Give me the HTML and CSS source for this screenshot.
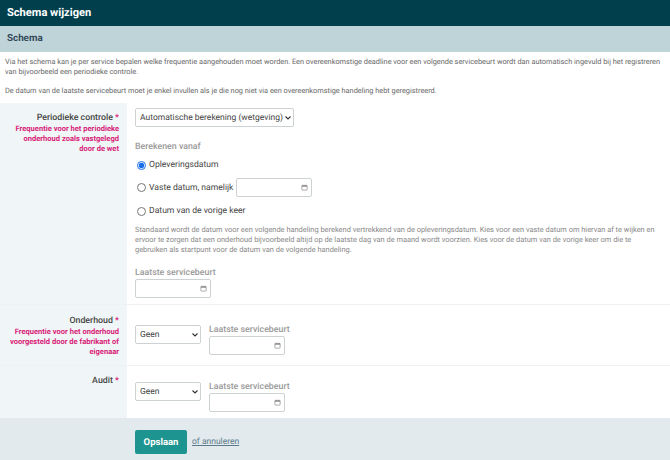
FILE: index.html
```html
<!DOCTYPE html>
<html lang="nl">
<head>
<meta charset="utf-8">
<title>Schema wijzigen</title>
<link rel="stylesheet" href="styles.css">
</head>
<body>
<header class="topbar">Schema wijzigen</header>
<h2 class="section">Schema</h2>
<div class="intro">
<p>Via het schema kan je per service bepalen welke frequentie aangehouden moet worden. Een overeenkomstige deadline voor een volgende servicebeurt wordt dan automatisch ingevuld bij het registreren van bijvoorbeeld een periodieke controle.</p>
<p>De datum van de laatste servicebeurt moet je enkel invullen als je die nog niet via een overeenkomstige handeling hebt geregistreerd.</p>
</div>
<form class="form">
<div class="row row-one">
<div class="side">
<div class="label">Periodieke controle <span class="req">*</span></div>
<div class="hint">Frequentie voor het periodieke onderhoud zoals vastgelegd door de wet</div>
</div>
<div class="main">
<select class="select select-wide"><option>Automatische berekening (wetgeving)</option></select>
<div class="sub sub-calc">Berekenen vanaf</div>
<label class="radio radio-first"><input type="radio" name="v" checked> Opleveringsdatum</label>
<div class="radio radio-date"><label class="radio-inline"><input type="radio" name="v"> Vaste datum, namelijk</label>
<div class="date date-fixed"><svg class="cal" viewBox="0 0 8 8"><rect x="1" y="1.5" width="6" height="5.5" rx=".8" fill="none" stroke="#888" stroke-width=".8"/><rect x="1" y="1.5" width="6" height="1.6" fill="#888"/></svg></div></div>
<label class="radio radio-last"><input type="radio" name="v"> Datum van de vorige keer</label>
<p class="help">Standaard wordt de datum voor een volgende handeling berekend vertrekkend van de opleveringsdatum. Kies voor een vaste datum om hiervan af te wijken en ervoor te zorgen dat een onderhoud bijvoorbeeld altijd op de laatste dag van de maand wordt voorzien. Kies voor de datum van de vorige keer om die te gebruiken als startpunt voor de datum van de volgende handeling.</p>
<div class="sub sub-last">Laatste servicebeurt</div>
<div class="date"><svg class="cal" viewBox="0 0 8 8"><rect x="1" y="1.5" width="6" height="5.5" rx=".8" fill="none" stroke="#888" stroke-width=".8"/><rect x="1" y="1.5" width="6" height="1.6" fill="#888"/></svg></div>
</div>
</div>
<div class="row row-two">
<div class="side">
<div class="label">Onderhoud <span class="req">*</span></div>
<div class="hint">Frequentie voor het onderhoud voorgesteld door de fabrikant of eigenaar</div>
</div>
<div class="main inline">
<select class="select select-small"><option>Geen</option></select>
<div class="stack">
<div class="sub">Laatste servicebeurt</div>
<div class="date"><svg class="cal" viewBox="0 0 8 8"><rect x="1" y="1.5" width="6" height="5.5" rx=".8" fill="none" stroke="#888" stroke-width=".8"/><rect x="1" y="1.5" width="6" height="1.6" fill="#888"/></svg></div>
</div>
</div>
</div>
<div class="row row-three">
<div class="side">
<div class="label">Audit <span class="req">*</span></div>
</div>
<div class="main inline">
<select class="select select-small"><option>Geen</option></select>
<div class="stack">
<div class="sub">Laatste servicebeurt</div>
<div class="date"><svg class="cal" viewBox="0 0 8 8"><rect x="1" y="1.5" width="6" height="5.5" rx=".8" fill="none" stroke="#888" stroke-width=".8"/><rect x="1" y="1.5" width="6" height="1.6" fill="#888"/></svg></div>
</div>
</div>
</div>
<div class="actions">
<button type="button" class="save">Opslaan</button>
<a class="cancel" href="#">of annuleren</a>
</div>
</form>
</body>
</html>
```
FILE: styles.css
```css
* { box-sizing: border-box; }
html, body { margin: 0; height: 460px; overflow: hidden; }
body { font-family: Roboto, "Liberation Sans", sans-serif; background: #fff; color: #444; text-rendering: geometricPrecision; }
.topbar { height: 26px; background: #013f4d; color: #fff; font-size: 11.1px; font-weight: 700; line-height: 26px; padding-left: 7px; }
.section { margin: 0; height: 26px; background: #bfd4d9; color: #34495a; font-size: 9.8px; font-weight: 700; line-height: 26px; padding-left: 7px; }
.intro { height: 51px; padding: 5px 5px 0; font-size: 7.35px; line-height: 10px; color: #666; }
.intro p { margin: 0 0 9px; }
.row { display: flex; border-bottom: 1px solid #eef2f3; }
.row-one { height: 202px; }
.row-two { height: 61px; }
.row-three { height: 52px; border-bottom: 0; }
.side { width: 127px; flex: none; background: #f0f6f7; padding: 9px 8px 0 6px; text-align: right; }
.row-one .side { padding-left: 12px; }
.row-two .side { padding-top: 10px; }
.row-three .side { padding-top: 9px; }
.label { font-size: 8.8px; font-weight: 500; line-height: 12px; color: #444; }
.req { color: #d81b78; }
.hint { font-size: 7.55px; font-weight: 700; line-height: 9.8px; color: #d81b78; }
.main { flex: 1; padding: 5px 0 0 8px; }
.inline { display: flex; align-items: flex-start; gap: 8px; padding-top: 20px; }
.row-three .inline { padding-top: 16px; }
.select { display: block; height: 19px; appearance: none; border: 1px solid #ccd2d4; border-radius: 2px; background: #fff url("data:image/svg+xml,%3Csvg xmlns='http://www.w3.org/2000/svg' width='8' height='6'%3E%3Cpath d='M1.5 1.5l2.5 2.5 2.5-2.5' fill='none' stroke='%23333' stroke-width='1.1'/%3E%3C/svg%3E") no-repeat right 1px center; font-family: inherit; font-size: 8.5px; color: #444; padding: 0 0 0 4px; text-rendering: geometricPrecision; }
.select-wide { width: 159px; }
.select-small { width: 66px; }
.sub { font-size: 8.8px; font-weight: 500; line-height: 11px; color: #999; }
.sub-calc { margin-top: 15px; }
.radio { display: flex; align-items: center; font-size: 8.6px; line-height: 12px; color: #444; }
.radio input { margin: 0 3px 0 2px; width: 9px; height: 9px; accent-color: #1a6fe8; }
.radio-inline { display: flex; align-items: center; }
.radio-first { margin-top: 6px; }
.radio-date { margin-top: 7px; gap: 3px; }
.radio-last { margin-top: 8px; }
.date { position: relative; width: 76px; height: 19px; border: 1px solid #ccd2d4; border-radius: 2px; background: #fff; }
.date-fixed { width: 76px; }
.cal { position: absolute; right: 3px; top: 5px; width: 7px; height: 7px; }
.help { margin: 8px 0 0; font-size: 7.43px; line-height: 10px; color: #888; width: 525px; }
.sub-last { margin-top: 13px; margin-bottom: 0; }
.actions { display: flex; align-items: center; height: 42px; background: #e2eaed; padding: 6px 0 0 135px; gap: 5px; }
.save { height: 24px; width: 52px; border: 0; border-radius: 2px; background: #1e9490; color: #fff; font-family: inherit; font-size: 9.5px; font-weight: 700; padding: 0; text-rendering: geometricPrecision; }
.cancel { font-size: 8.5px; color: #5b7a8c; }
```
